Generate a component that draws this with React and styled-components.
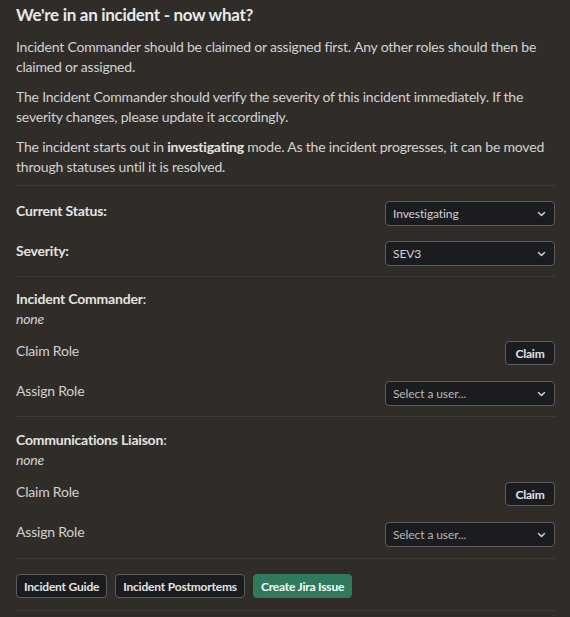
import React from 'react';
import styled, { createGlobalStyle } from 'styled-components';

const GlobalStyle = createGlobalStyle`
  html, body {
    margin: 0;
    padding: 0;
    background: #302d28;
  }
  body {
    font-family: Lato, "Open Sans", "Liberation Sans", sans-serif;
    color: #d1d2d3;
    letter-spacing: -0.2px;
  }
`;

const Page = styled.div`
  width: 570px;
  min-height: 617px;
  box-sizing: border-box;
  padding: 4px 15px 0 16px;
  background: #302d28;
`;

const Title = styled.h1`
  margin: 0 0 11px;
  font-size: 17px;
  line-height: 22px;
  font-weight: 700;
  letter-spacing: -0.3px;
  color: #e8e8e8;
`;

const Para = styled.p`
  margin: 0 0 10px;
  font-size: 14px;
  line-height: 20px;
  color: #d1d2d3;

  b {
    font-weight: 700;
    color: #e3e3e3;
  }
`;

const Divider = styled.hr`
  margin: ${(p) => p.$top || 0}px 0 0;
  border: 0;
  height: 1px;
  background: #3d3b38;
`;

const Section = styled.section`
  display: flex;
  flex-direction: column;
  padding: ${(p) => p.$pad || '13px 0 11px'};
`;

const Row = styled.div`
  display: flex;
  justify-content: space-between;
  align-items: flex-start;
  margin-top: ${(p) => p.$gap || 0}px;
`;

const Label = styled.div`
  font-size: 14px;
  line-height: 20px;
  font-weight: ${(p) => (p.$bold ? 700 : 400)};
  color: ${(p) => (p.$bold ? '#e3e3e3' : '#d1d2d3')};
`;

const Italic = styled.div`
  font-size: 14px;
  line-height: 20px;
  font-style: italic;
  color: #d1d2d3;
`;

const SelectBox = styled.div`
  width: 170px;
  height: 25px;
  box-sizing: border-box;
  display: flex;
  align-items: center;
  justify-content: space-between;
  padding: 0 8px 0 7px;
  background: #1b1c1f;
  border: 1px solid #5d5d5d;
  border-radius: 4px;
  font-size: 12px;
  letter-spacing: -0.1px;
  color: ${(p) => (p.$placeholder ? '#b8b8b8' : '#d1d2d3')};
`;

const Button = styled.button`
  height: 24px;
  box-sizing: border-box;
  padding: 0 7px;
  border-radius: 4px;
  font-family: Lato, "Open Sans", "Liberation Sans", sans-serif;
  font-size: 12px;
  font-weight: 700;
  letter-spacing: -0.2px;
  cursor: pointer;
  background: ${(p) => (p.$primary ? '#2f7a5b' : '#1b1c1f')};
  border: 1px solid ${(p) => (p.$primary ? '#2f7a5b' : '#5d5d5d')};
  color: ${(p) => (p.$primary ? '#ffffff' : '#e3e3e3')};
`;

const ClaimButton = styled(Button)`
  width: 50px;
  padding: 0;
`;

const Actions = styled.div`
  display: flex;
  gap: 8px;
  padding: 15px 0 12px;
`;

function Chevron() {
  return (
    <svg width="9" height="6" viewBox="0 0 9 6" fill="none">
      <path d="M1.5 1.5L4.5 4.5L7.5 1.5" stroke="#c8c8c8" strokeWidth="1.6" strokeLinecap="round" strokeLinejoin="round" />
    </svg>
  );
}

function Select({ value, placeholder }) {
  return (
    <SelectBox $placeholder={placeholder}>
      <span>{value}</span>
      <Chevron />
    </SelectBox>
  );
}

function RoleSection({ role, pad }) {
  return (
    <Section $pad={pad}>
      <Label $bold>
        {role}
        <span style={{ fontWeight: 400 }}>:</span>
      </Label>
      <Italic>none</Italic>
      <Row $gap={12}>
        <Label>Claim Role</Label>
        <ClaimButton>Claim</ClaimButton>
      </Row>
      <Row $gap={16}>
        <Label>Assign Role</Label>
        <Select value="Select a user..." placeholder />
      </Row>
    </Section>
  );
}

export default function App() {
  return (
    <Page>
      <GlobalStyle />
      <Title>We're in an incident - now what?</Title>
      <Para>
        Incident Commander should be claimed or assigned first. Any other roles should then be
        claimed or assigned.
      </Para>
      <Para>
        The Incident Commander should verify the severity of this incident immediately. If the
        severity changes, please update it accordingly.
      </Para>
      <Para>
        The incident starts out in <b>investigating</b> mode. As the incident progresses, it can be
        moved through statuses until it is resolved.
      </Para>
      <Divider $top={-2} />
      <Section $pad="15px 0 10px">
        <Row>
          <Label $bold>Current Status:</Label>
          <Select value="Investigating" />
        </Row>
        <Row $gap={15}>
          <Label $bold>Severity:</Label>
          <Select value="SEV3" />
        </Row>
      </Section>
      <Divider />
      <RoleSection role="Incident Commander" pad="12px 0 10px" />
      <Divider />
      <RoleSection role="Communications Liaison" pad="13px 0 11px" />
      <Divider />
      <Actions>
        <Button>Incident Guide</Button>
        <Button>Incident Postmortems</Button>
        <Button $primary>Create Jira Issue</Button>
      </Actions>
      <Divider />
    </Page>
  );
}
